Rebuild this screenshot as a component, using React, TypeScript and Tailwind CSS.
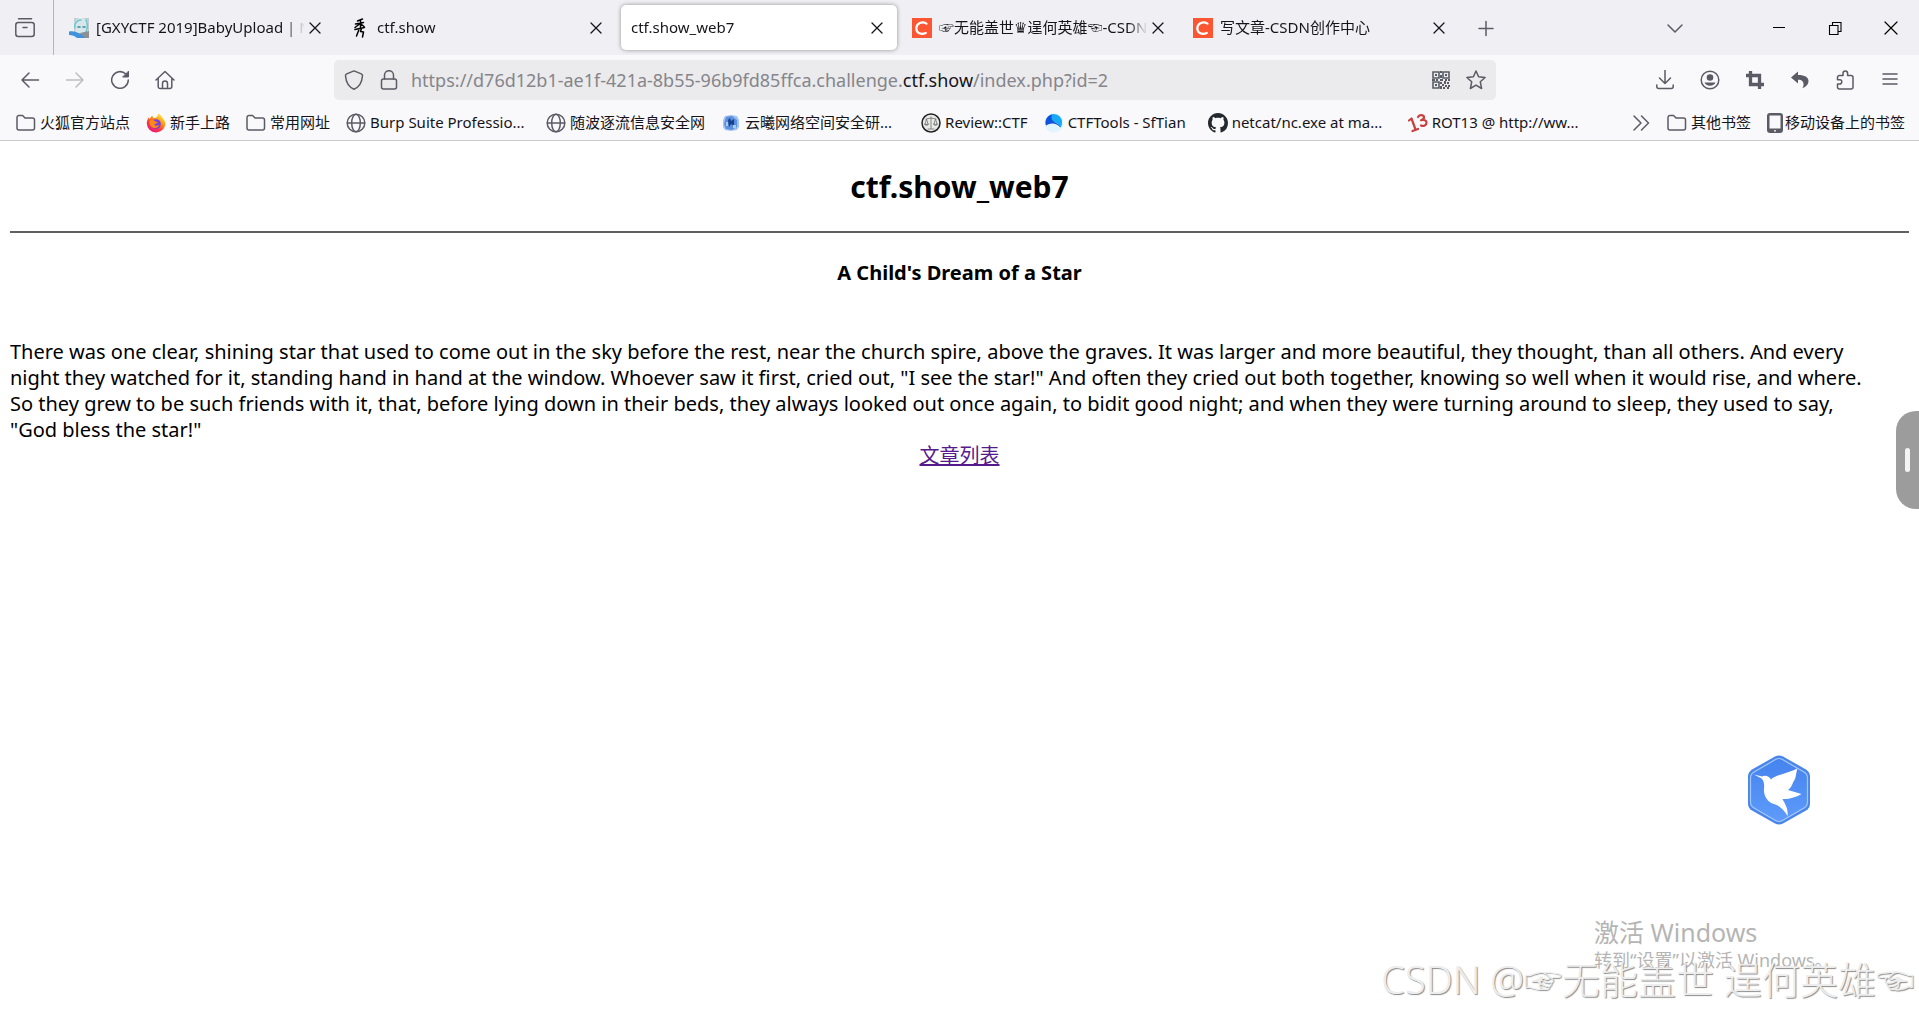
import React from 'react';
import clsx from 'clsx';

type Tab = {
  title: string;
  icon?: React.ReactNode;
  active?: boolean;
};

type Bookmark = {
  label: string;
  icon: React.ReactNode;
  className?: string;
};

const Icon = ({ children, className = 'w-5 h-5' }: { children: React.ReactNode; className?: string }) => (
  <svg
    viewBox="0 0 20 20"
    fill="none"
    stroke="currentColor"
    strokeWidth="1.5"
    strokeLinecap="round"
    strokeLinejoin="round"
    className={clsx('shrink-0', className)}
    aria-hidden="true"
  >
    {children}
  </svg>
);

const CsdnIcon = () => (
  <Icon>
    <rect width="20" height="20" fill="#fc5531" stroke="none" />
    <path d="M14.500 5.600C10 2.800 4.500 5 4.300 10.300c0 5 4.800 6.700 9.500 4.700" stroke="#fff" strokeWidth="2.200" />
  </Icon>
);

const AvatarIcon = () => (
  <Icon>
    <rect x="5" width="15" height="16" fill="#c3cdd0" stroke="none" />
    <path d="M5 6c1-5 4-6 7-6s6 1 7 5v8c-3 3-9 4-12 1z" fill="#d7e6ea" stroke="none" />
    <path d="M6 10c-1-5 2-8 6-8M17 2c2 4 2 7 0 12" stroke="#6fc9cf" strokeWidth="1.600" />
    <path d="M9 9h2M14 9h2" stroke="#3a8d9a" />
    <path d="M0 13.500c5-1 7 1 11 2s5 1 7 4.500H8c-2-2-5-3-8-3z" fill="#3f93dc" stroke="none" />
    <path d="M11 15l9-2v7h-4z" fill="#8c9095" stroke="none" />
  </Icon>
);

const BrushIcon = () => (
  <Icon>
    <g stroke="#000">
      <path d="M12.500 1L7.500 3M5.500 6l8-1.500M10.500 2.500v7M9.500 6L5 9.500M11 6l3 2.500" strokeWidth="1.500" />
      <path d="M5 11.500l9.500-2M9 11.500L6.500 18M11.500 10.500l-1 3 3 .5-1 5" strokeWidth="1.500" />
    </g>
  </Icon>
);

const FolderIcon = () => (
  <Icon>
    <path d="M1 4.500A2 2 0 0 1 3 2.500h3.600L9 5h7.500a2 2 0 0 1 2 2v8a2 2 0 0 1-2 2H3a2 2 0 0 1-2-2z" />
  </Icon>
);

const GlobeIcon = () => (
  <Icon>
    <circle cx="10" cy="10" r="8.800" />
    <ellipse cx="10" cy="10" rx="4.300" ry="8.800" />
    <path d="M1.500 10h17" />
  </Icon>
);

const FirefoxIcon = () => (
  <Icon>
    <defs>
      <linearGradient id="fx-flame" x1="0.850" y1="0.050" x2="0.200" y2="1">
        <stop offset="0" stopColor="#fff44f" />
        <stop offset="0.350" stopColor="#ff980e" />
        <stop offset="0.650" stopColor="#ff3647" />
        <stop offset="1" stopColor="#e31587" />
      </linearGradient>
    </defs>
    <path d="M12.500.5c3 2 3.200 3.500 4.500 5 2 2 2.500 4 2.300 6A9.300 9.300 0 0 1 .800 10.500c0-2.500.7-4.500 2-6.300l.6 2.100C4.500 5 5 3.500 6.500 2.500c-.2 1.500.4 2 1.200 2.400 2 .3 3.800-1 4.800-4.400z" fill="url(#fx-flame)" stroke="none" />
    <circle cx="10" cy="11" r="4.800" fill="#7542e5" stroke="none" />
    <path d="M3.500 8c2-2 4-1 5.500.3 1.200 1 2.500.2 2.800 1-.5 1.500-2.800 1-3.500 2.500.7 1.200 3 1.500 5 0-1 3-4.500 4.300-7.500 2.500C4 13 3 10.500 3.500 8z" fill="#ff8a16" stroke="none" />
  </Icon>
);

const CloudIcon = () => (
  <Icon>
    <g stroke="none">
      <path d="M4 3l6-1 6 1 2 4v7l-2 3-6 1-6-1-2-3V7z" fill="#a3c3f0" />
      <path d="M5 4l6-1 5 4v7l-5 3-6-1-2-5z" fill="#5b8fde" />
      <path d="M7 7l2-2 1 3 3-2v7l-3-2-2 3z" fill="#16418f" />
      <path d="M5 9h2v4H5zM12 12h3v3h-3z" fill="#a9cbf6" />
    </g>
  </Icon>
);

const ScalesIcon = () => (
  <Icon>
    <circle cx="10" cy="10" r="9" fill="#e9ebe9" stroke="#222" />
    <path d="M10 4v11.500M5 6l5-1 5 1M7 16h6M4 11l1.500-5L7 11zM13 11l1.500-5L16 11z" stroke="#6c706c" strokeWidth="0.800" />
    <path d="M3.500 11c.5 2 3.500 2 4 0M12.500 11c.5 2 3.500 2 4 0" stroke="#6c706c" strokeWidth="0.800" />
  </Icon>
);

const WaveIcon = () => (
  <Icon>
    <g stroke="none">
      <circle cx="10" cy="10" r="9.700" fill="#e2f4fd" />
      <path d="M2 9a8 8 0 0 1 8-8 8 8 0 0 1 8 9c-.1 2-.6 3.500-1.500 4.500-2-4-6-6.500-9-5.500z" fill="#18a9f5" />
      <path d="M2 12.500A8 8 0 0 1 8.500 1.500c-2 3-1 6 2 7.500 3 1.500 5.500 3.500 6 5.500-4-4.500-9.500-5.500-14.500-2z" fill="#1152dd" />
    </g>
  </Icon>
);

const GithubIcon = () => (
  <svg viewBox="0 0 16 16" className="w-5 h-5 shrink-0" fill="#24292f" aria-hidden="true">
    <path d="M8 0C3.580 0 0 3.580 0 8c0 3.540 2.290 6.530 5.470 7.590.4.070.55-.17.55-.38 0-.19-.01-.82-.01-1.490-2.010.37-2.530-.49-2.690-.94-.09-.23-.48-.94-.82-1.130-.28-.15-.68-.52-.01-.53.63-.01 1.080.58 1.230.82.72 1.210 1.870.87 2.330.66.070-.52.28-.87.51-1.070-1.780-.2-3.640-.89-3.640-3.950 0-.87.31-1.590.82-2.150-.08-.2-.36-1.020.08-2.120 0 0 .67-.21 2.200.82.64-.18 1.320-.27 2-.27s1.360.09 2 .27c1.530-1.040 2.200-.82 2.200-.82.44 1.100.16 1.920.08 2.120.51.56.82 1.270.82 2.150 0 3.070-1.870 3.750-3.650 3.950.29.25.54.73.54 1.480 0 1.070-.01 1.930-.01 2.200 0 .21.15.46.55.38A8.010 8.010 0 0 0 16 8c0-4.420-3.580-8-8-8z" />
  </svg>
);

const Rot13Icon = () => (
  <Icon>
    <g stroke="#c9403f" strokeWidth="2.200">
      <path d="M1 7.500L3.500 5.500l4 11M4.500 18l5.500-2" />
      <path d="M10 4c1.500-2.500 5.500-2.500 6 0 .2 2-1.500 2.800-3 3.200 3-.7 5.500.3 5.500 2.500 0 2.500-3 4-5.500 2.800" />
    </g>
  </Icon>
);

const PhoneIcon = () => (
  <svg viewBox="0 0 16 20" className="w-4 h-5 shrink-0" aria-hidden="true">
    <path fillRule="evenodd" d="M3 0h10a3 3 0 0 1 3 3v14a3 3 0 0 1-3 3H3a3 3 0 0 1-3-3V3a3 3 0 0 1 3-3zM2.500 2.500v13h11v-13zM7 17.200v1.300h2v-1.300z" fill="#5b5b66" />
  </svg>
);

const CloseIcon = () => (
  <Icon className="w-5 h-5 text-[#15141a]">
    <path d="M5 5l10 10M15 5L5 15" strokeWidth="1.300" />
  </Icon>
);

const TABS: Tab[] = [
  { title: '[GXYCTF 2019]BabyUpload | NSSCTF', icon: <AvatarIcon /> },
  { title: 'ctf.show', icon: <BrushIcon /> },
  { title: 'ctf.show_web7', active: true },
  { title: '☞无能盖世♛逞何英雄☜-CSDN博客', icon: <CsdnIcon /> },
  { title: '写文章-CSDN创作中心', icon: <CsdnIcon /> },
];

const BOOKMARKS: Bookmark[] = [
  { label: '火狐官方站点', icon: <FolderIcon /> },
  { label: '新手上路', icon: <FirefoxIcon /> },
  { label: '常用网址', icon: <FolderIcon /> },
  { label: 'Burp Suite Professio...', icon: <GlobeIcon />, className: 'w-[184px]' },
  { label: '随波逐流信息安全网', icon: <GlobeIcon /> },
  { label: '云曦网络空间安全研...', icon: <CloudIcon />, className: 'w-[184px]' },
  { label: 'Review::CTF', icon: <ScalesIcon /> },
  { label: 'CTFTools - SfTian', icon: <WaveIcon />, className: 'w-[148px]' },
  { label: 'netcat/nc.exe at ma...', icon: <GithubIcon />, className: 'w-[184px]' },
  { label: 'ROT13 @ http://ww...', icon: <Rot13Icon />, className: 'w-[184px]' },
];

const ToolButton = ({ label, children, className }: { label: string; children: React.ReactNode; className?: string }) => (
  <button type="button" aria-label={label} className={clsx('flex h-10 w-[45px] shrink-0 items-center justify-center', className)}>
    {children}
  </button>
);

const TabStrip = () => (
  <div className="flex h-[55px] bg-[#f0f0f4] text-[#5b5b66]">
    <button type="button" aria-label="Firefox View" className="flex w-[54px] shrink-0 items-center justify-center border-r border-[#b4b4ba] pr-1">
      <Icon>
        <rect x="0.800" y="4.500" width="18.400" height="14" rx="2.500" />
        <path d="M3.500.800h13M8 9.500h4" />
      </Icon>
    </button>
    <div className="flex items-center gap-[5px] pl-[5px]">
      {TABS.map((tab) => (
        <div
          key={tab.title}
          className={clsx(
            'flex h-[45px] w-[276px] items-center rounded-[5px] px-[10px]',
            tab.active && 'bg-white shadow-[0_0_4px_rgba(0,0,0,0.4)]'
          )}
        >
          {tab.icon && <span className="mr-[7px] shrink-0">{tab.icon}</span>}
          <span className="min-w-0 flex-1 overflow-hidden whitespace-nowrap text-[15px] text-[#15141a] [mask-image:linear-gradient(to_left,transparent,black_20px)]">
            {tab.title}
          </span>
          <button type="button" aria-label="Close tab" className="shrink-0">
            <CloseIcon />
          </button>
        </div>
      ))}
    </div>
    <button type="button" aria-label="New tab" className="ml-1 flex w-[45px] shrink-0 items-center justify-center">
      <Icon>
        <path d="M10 3.500v14M3 10.500h14" />
      </Icon>
    </button>
    <div className="flex-1" />
    <button type="button" aria-label="List all tabs" className="mr-[54px] flex w-[45px] shrink-0 items-center justify-center">
      <Icon>
        <path d="M3 7l7 7 7-7" />
      </Icon>
    </button>
    <div className="flex text-black">
      <button type="button" aria-label="Minimize" className="flex w-14 items-center justify-center">
        <Icon>
          <path d="M4 9.500h12" strokeWidth="1" strokeLinecap="butt" />
        </Icon>
      </button>
      <button type="button" aria-label="Restore" className="flex w-14 items-center justify-center">
        <Icon>
          <path d="M4.500 7.500h8.500v9H4.500zM7.500 7V4.500h8.500v9h-3" strokeWidth="1.100" strokeLinejoin="miter" />
        </Icon>
      </button>
      <button type="button" aria-label="Close window" className="flex w-14 items-center justify-center">
        <Icon>
          <path d="M4 4l12 12M16 4L4 16" strokeWidth="1.200" />
        </Icon>
      </button>
    </div>
  </div>
);

const UrlBar = () => (
  <div className="flex h-10 flex-1 items-center rounded-[5px] bg-[#ebebed] px-[10px] text-[#5b5b66]">
    <Icon>
      <path d="M10 .900l7.300 3c.9.400 1.300 1 1.200 1.900C18 12.500 15.500 17 10 19.200 4.500 17 2 12.500 1.500 5.800c-.1-.9.3-1.500 1.200-1.900z" />
    </Icon>
    <Icon className="ml-[15px] w-5 h-5">
      <rect x="2.500" y="9" width="15" height="10" rx="2" />
      <path d="M5.500 9V5.200a4.500 4.500 0 0 1 9 0V9" />
    </Icon>
    <div className="ml-3 flex-1 whitespace-nowrap text-lg leading-6 text-[#85858a]">
      https://d76d12b1-ae1f-421a-8b55-96b9fd85ffca.challenge.<span className="text-[#15141a]">ctf.show</span>/index.php?id=2
    </div>
    <button type="button" aria-label="QR code" className="mr-[15px]">
      <Icon>
        <g strokeLinejoin="miter">
          <path d="M2 2h6v6H2zM12 2h6v6h-6zM2 12h6v6H2z" strokeWidth="1.600" />
          <path d="M4 4h2v2H4zM14 4h2v2h-2zM4 14h2v2H4zM9 1h2v2H9zM9 5h2v3H9zM9 9h3v2H9zM1 9h3v2H1zM5 9h2v2H5zM14 9h2v2h-2zM17 9h2v2h-2zM9 12h2v2H9zM11 14h2v2h-2zM13 11h2v3h-2zM16 12h2v2h-2zM14 15h2v2h-2zM17 15h2v2h-2zM9 16h2v3H9zM12 17h2v2h-2zM16 17h2v2h-2z" fill="currentColor" stroke="none" />
        </g>
      </Icon>
    </button>
    <button type="button" aria-label="Bookmark this page">
      <Icon>
        <path d="M10 1l2.600 5.800 6.500.7-4.800 4.300 1.300 6.700L10 15.200l-5.600 3.300 1.300-6.700L.9 7.500l6.500-.7z" />
      </Icon>
    </button>
  </div>
);

const NavBar = () => (
  <div className="flex items-center bg-[#f9f9fb] px-[7px] pt-[5px] text-[#5b5b66]">
    <ToolButton label="Back">
      <Icon><path d="M18.500 10H2M9 3l-7 7 7 7" /></Icon>
    </ToolButton>
    <ToolButton label="Forward" className="text-[#bdbdc2]">
      <Icon><path d="M1.500 10H18M11 3l7 7-7 7" /></Icon>
    </ToolButton>
    <ToolButton label="Reload">
      <Icon>
        <path d="M18.300 10a8.300 8.300 0 1 1-2.500-6l1.500 1.500" />
        <path d="M18.500 1.500v5.500H13z" fill="currentColor" strokeWidth="1" />
      </Icon>
    </ToolButton>
    <ToolButton label="Home">
      <Icon>
        <path d="M1 10l9-8.500 9 8.500M3.200 8.500v8a2 2 0 0 0 2 2h9.600a2 2 0 0 0 2-2v-8" />
        <path d="M7.500 18v-4.500a2.500 2.500 0 0 1 5 0V18" />
      </Icon>
    </ToolButton>
    <div className="mr-[146px] ml-[147px] flex flex-1">
      <UrlBar />
    </div>
    <ToolButton label="Downloads">
      <Icon><path d="M10 .500v12.500M4.500 8l5.500 5.500L15.500 8M1.800 15v1.500a2 2 0 0 0 2 2h12.400a2 2 0 0 0 2-2V15" /></Icon>
    </ToolButton>
    <ToolButton label="Account">
      <Icon>
        <circle cx="10" cy="10" r="8.800" />
        <circle cx="10" cy="7.500" r="3.300" fill="currentColor" stroke="none" />
        <path d="M4.500 12.500h11c-.6 2-2.800 3.200-5.500 3.200s-4.900-1.200-5.500-3.200z" fill="currentColor" stroke="none" />
      </Icon>
    </ToolButton>
    <ToolButton label="Screenshot">
      <Icon><path d="M5.500 1v13.500H19M1 5.500h13.500V19" strokeWidth="3.300" strokeLinecap="butt" strokeLinejoin="miter" /></Icon>
    </ToolButton>
    <ToolButton label="Undo">
      <Icon><path d="M8 1.500L1 7.500l7 6v-3.700c4 0 6 2 5.500 5.500-.1 1-.5 2-1.200 3 4-1.500 6.200-4 6.200-7 0-4.200-4-6.400-10.500-6.300z" fill="currentColor" stroke="none" /></Icon>
    </ToolButton>
    <ToolButton label="Extensions">
      <Icon><path d="M2.500 7.500a2 2 0 0 1 2-2H8V3.300a2.300 2.300 0 0 1 4.600 0v2.200h3.400a2 2 0 0 1 2 2v9.500a2 2 0 0 1-2 2H4.500a2 2 0 0 1-2-2v-3h2.200a2 2 0 0 0 0-4.300H2.500z" /></Icon>
    </ToolButton>
    <ToolButton label="Menu">
      <Icon><path d="M3 4h14M3 9h14M3 14h14" /></Icon>
    </ToolButton>
  </div>
);

const BookmarkLink = ({ label, icon, className }: Bookmark) => (
  <a href="#" className={clsx('flex shrink-0 items-center gap-1 whitespace-nowrap', className)}>
    {icon}
    <span>{label}</span>
  </a>
);

const BookmarksBar = () => (
  <div className="flex h-[41px] items-center border-b border-[#cccccf] bg-[#f9f9fb] pt-[5px] pr-[14px] pl-4 text-[15px] text-[#5b5b66]">
    <nav className="flex gap-4 [&_span]:text-[#15141a]">
      {BOOKMARKS.map((item) => (
        <BookmarkLink key={item.label} {...item} />
      ))}
    </nav>
    <div className="flex-1" />
    <button type="button" aria-label="More bookmarks" className="mr-4">
      <Icon><path d="M3 3l7 7-7 7M10.500 3l7 7-7 7" /></Icon>
    </button>
    <div className="flex gap-4 [&_span]:text-[#15141a]">
      <BookmarkLink label="其他书签" icon={<FolderIcon />} />
      <a href="#" className="flex items-center gap-[2px] whitespace-nowrap">
        <PhoneIcon />
        <span>移动设备上的书签</span>
      </a>
    </div>
  </div>
);

const BirdBadge = () => (
  <svg viewBox="0 0 64 70" className="h-[70px] w-16" aria-hidden="true">
    <defs>
      <linearGradient id="badge-bg" x1="0" y1="0" x2="0" y2="1">
        <stop offset="0" stopColor="#4583ee" />
        <stop offset="1" stopColor="#5e9bfb" />
      </linearGradient>
    </defs>
    <path d="M28 1.500q4-2 8 0l23 13q4 2.500 4 7v27q0 4.500-4 7l-23 13q-4 2-8 0l-23-13q-4-2.500-4-7v-27q0-4.500 4-7z" fill="#4a86ea" />
    <path d="M28.500 4.500q3.500-2 7 0l21.500 12.500q3.500 2 3.500 6v24q0 4-3.500 6L35.500 65.500q-3.500 2-7 0L7 53q-3.500-2-3.500-6V23q0-4 3.500-6z" fill="url(#badge-bg)" stroke="#a5c8fb" strokeWidth="1.200" />
    <path d="M7 19.500L15 21.500C18 20 22 21 24 24.500C28 20 42 18 50.500 13.500C48.500 19 49.500 23 46 27.500C45 31 43.500 33 41 35L54.500 39C50 42 41 44.500 35.500 44C38 49 41.500 54 40.500 61C37 55 33 51 27 49C20 47 16.500 40 17 34C17.500 29 17 26 14.500 23.500Z" fill="#fff" />
  </svg>
);

export default function App() {
  return (
    <div className="relative flex min-h-screen flex-col overflow-hidden bg-white font-['Noto_Sans','Noto_Sans_CJK_SC','DejaVu_Sans',sans-serif] text-black">
      <header>
        <TabStrip />
        <NavBar />
        <BookmarksBar />
      </header>

      <main className="px-[10px] pt-[26px] text-xl leading-[26px]">
        <h1 className="text-center text-3xl leading-10 font-bold">ctf.show_web7</h1>
        <hr className="mt-6 border-t-2 border-[#606060]" />
        <h2 className="mt-[27px] text-center text-xl leading-[26px] font-bold">A Child's Dream of a Star</h2>
        <p className="mt-[53px]">
          There was one clear, shining star that used to come out in the sky before the rest, near the church spire, above the graves. It was larger and more beautiful, they thought, than all others. And every
          <br />
          night they watched for it, standing hand in hand at the window. Whoever saw it first, cried out, "I see the star!" And often they cried out both together, knowing so well when it would rise, and where.
          <br />
          So they grew to be such friends with it, that, before lying down in their beds, they always looked out once again, to bidit good night; and when they were turning around to sleep, they used to say,
          <br />
          "God bless the star!"
        </p>
        <div className="text-center">
          <a href="#" className="text-[#551a8b] underline">文章列表</a>
        </div>
      </main>

      {/* Side drawer handle */}
      <button
        type="button"
        aria-label="Open side panel"
        className="absolute top-[411px] right-0 flex h-[98px] w-[23px] items-center rounded-l-[20px] bg-[#9c9c9c] pl-[9px]"
      >
        <span className="h-6 w-[5px] rounded-full bg-[#f4f4f4]" />
      </button>

      <div className="absolute right-[108px] bottom-[186px]">
        <BirdBadge />
      </div>

      {/* Desktop watermarks */}
      <div className="absolute right-[85px] bottom-[39px] w-60 whitespace-nowrap text-[#b5b5b5]">
        <p className="text-[25px] leading-8">激活 Windows</p>
        <p className="text-lg leading-6">转到“设置”以激活 Windows。</p>
      </div>
      <p className="absolute right-[5px] bottom-[6px] text-[38px] leading-[52px] font-light whitespace-nowrap text-[#ededed] [text-shadow:1px_1px_1px_#8a8a8a]">
        CSDN @☞无能盖世 逞何英雄☜
      </p>
    </div>
  );
}
